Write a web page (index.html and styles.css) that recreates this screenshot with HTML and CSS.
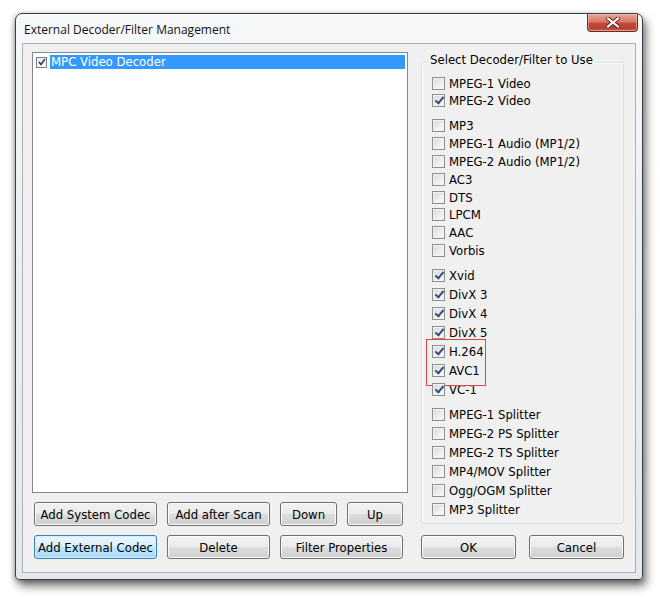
FILE: index.html
```html
<!DOCTYPE html>
<html>
<head>
<meta charset="utf-8">
<link rel="stylesheet" href="styles.css">
</head>
<body>
<div class="page">
  <div class="window">
    <div class="titlebar">
      <span class="title">External Decoder/Filter Management</span>
      <span class="close">
        <svg width="14" height="11" viewBox="0 0 14 11"><path d="M2 1.5 L12 9.5 M12 1.5 L2 9.5" stroke="#5a1f18" stroke-width="4" stroke-linecap="square"/><path d="M2 1.5 L12 9.5 M12 1.5 L2 9.5" stroke="#ffffff" stroke-width="2.2" stroke-linecap="square"/></svg>
      </span>
    </div>
    <div class="client">
      <div class="leftcol">
        <div class="listbox">
          <div class="lb-item">
            <span class="lb-check"><svg width="8" height="8" viewBox="0 0 8 8"><path d="M1 4 L3 6.5 L7 1" fill="none" stroke="#2b3b66" stroke-width="1.6"/></svg></span>
            <span class="lb-text">MPC Video Decoder</span>
          </div>
        </div>
        <div class="btnrow">
          <button class="btn w123">Add System Codec</button>
          <button class="btn w103">Add after Scan</button>
          <button class="btn w57">Down</button>
          <button class="btn w56">Up</button>
        </div>
        <div class="btnrow row2">
          <button class="btn w123 focused">Add External Codec</button>
          <button class="btn w103">Delete</button>
          <button class="btn w123">Filter Properties</button>
        </div>
      </div>
      <div class="rightcol">
        <fieldset class="group">
          <legend class="legend">Select Decoder/Filter to Use</legend>
          <div class="grp g1">
            <div class="row"><span class="cb"></span><span class="lbl">MPEG-1 Video</span></div>
            <div class="row"><span class="cb on"></span><span class="lbl">MPEG-2 Video</span></div>
          </div>
          <div class="grp g2">
            <div class="row"><span class="cb"></span><span class="lbl">MP3</span></div>
            <div class="row"><span class="cb"></span><span class="lbl">MPEG-1 Audio (MP1/2)</span></div>
            <div class="row"><span class="cb"></span><span class="lbl">MPEG-2 Audio (MP1/2)</span></div>
            <div class="row"><span class="cb"></span><span class="lbl">AC3</span></div>
            <div class="row"><span class="cb"></span><span class="lbl">DTS</span></div>
            <div class="row"><span class="cb"></span><span class="lbl">LPCM</span></div>
            <div class="row"><span class="cb"></span><span class="lbl">AAC</span></div>
            <div class="row"><span class="cb"></span><span class="lbl">Vorbis</span></div>
          </div>
          <div class="grp g3">
            <div class="row"><span class="cb on"></span><span class="lbl">Xvid</span></div>
            <div class="row"><span class="cb on"></span><span class="lbl">DivX 3</span></div>
            <div class="row"><span class="cb on"></span><span class="lbl">DivX 4</span></div>
            <div class="row"><span class="cb on"></span><span class="lbl">DivX 5</span></div>
            <div class="mark">
              <div class="row"><span class="cb on"></span><span class="lbl">H.264</span></div>
              <div class="row"><span class="cb on"></span><span class="lbl">AVC1</span></div>
            </div>
            <div class="row"><span class="cb on"></span><span class="lbl">VC-1</span></div>
          </div>
          <div class="grp g4">
            <div class="row"><span class="cb"></span><span class="lbl">MPEG-1 Splitter</span></div>
            <div class="row"><span class="cb"></span><span class="lbl">MPEG-2 PS Splitter</span></div>
            <div class="row"><span class="cb"></span><span class="lbl">MPEG-2 TS Splitter</span></div>
            <div class="row"><span class="cb"></span><span class="lbl">MP4/MOV Splitter</span></div>
            <div class="row"><span class="cb"></span><span class="lbl">Ogg/OGM Splitter</span></div>
            <div class="row"><span class="cb"></span><span class="lbl">MP3 Splitter</span></div>
          </div>
        </fieldset>
        <div class="btnrow okrow">
          <button class="btn w95">OK</button>
          <button class="btn w95">Cancel</button>
        </div>
      </div>
    </div>
  </div>
</div>
</body>
</html>
```

FILE: styles.css
```css
* { box-sizing: border-box; }
html, body { margin: 0; padding: 0; background: #ffffff; }
body { font-family: "DejaVu Sans Condensed", "DejaVu Sans", sans-serif; font-size: 13px; color: #000; }

.page { padding: 13px 0 0 15px; width: 660px; height: 597px; }

.window {
  width: 628px;
  height: 567px;
  border: 1px solid #3c3f44;
  border-radius: 7px 7px 4px 4px;
  background: linear-gradient(180deg, #f7f8fa 0%, #eceff3 40%, #e4e8ec 100%);
  box-shadow: 3px 6px 10px rgba(0,0,0,0.55), -1px 1px 5px rgba(0,0,0,0.25);
  display: flex;
  flex-direction: column;
}

.titlebar {
  height: 29px;
  display: flex;
  justify-content: space-between;
  align-items: flex-start;
  padding: 0 4px 0 8px;
}
.title {
  align-self: center;
  font-family: "Open Sans", "Noto Sans", sans-serif;
  font-size: 12px;
  color: #111;
  padding-top: 2px;
}
.close {
  width: 51px;
  height: 18px;
  border: 1px solid #6c2a22;
  border-top: none;
  border-radius: 0 0 4px 4px;
  background: linear-gradient(180deg, #e7a596 0%, #d77a68 45%, #c44a37 55%, #b8412f 85%, #d06a55 100%);
  box-shadow: inset 0 0 0 1px rgba(255,220,210,0.45);
  display: flex;
  align-items: center;
  justify-content: center;
}

.client {
  flex: 1;
  margin: 0 6px 6px 6px;
  border: 1px solid #aab0b8;
  background: #f0f0f0;
  display: flex;
  gap: 13px;
  padding: 8px 11px 13px 9px;
}

.leftcol { width: 376px; display: flex; flex-direction: column; }
.rightcol { width: 203px; display: flex; flex-direction: column; margin-top: 1px; }

.listbox {
  height: 441px;
  background: #ffffff;
  border: 1px solid #828790;
  padding: 2px 2px;
}
.lb-item { display: flex; align-items: center; height: 14px; }
.lb-check {
  width: 11px; height: 11px;
  border: 1px solid #7a7f8a;
  background: linear-gradient(135deg, #e6e8ec, #ffffff);
  margin: 0 3px 0 1px;
  display: flex; align-items: center; justify-content: center;
}
.lb-text {
  flex: 1;
  height: 14px;
  line-height: 14px;
  background: #3399ff;
  color: #ffffff;
  padding-left: 1px;
}

.btnrow { display: flex; gap: 10px; margin-left: 2px; margin-top: 9px; }
.leftcol .btnrow:first-of-type { margin-top: auto; }
.okrow { margin-left: 0; gap: 13px; margin-top: auto; }

.btn {
  height: 24px;
  font: inherit;
  color: #000;
  border: 1px solid #707070;
  border-radius: 3px;
  background: linear-gradient(180deg, #f2f2f2 0%, #ebebeb 48%, #dddddd 52%, #cfcfcf 100%);
  box-shadow: inset 0 0 0 1px #fbfbfb;
  padding: 0;
  text-align: center;
}
.btn.focused {
  border-color: #3c7fb1;
  background: linear-gradient(180deg, #eaf6fd 0%, #d9f0fc 48%, #bee6fd 52%, #a7d9f5 100%);
  box-shadow: inset 0 0 0 1px #d6ecf8;
}
.w123 { width: 123px; }
.w103 { width: 103px; }
.w57 { width: 57px; }
.w56 { width: 56px; }
.w95 { width: 95px; }

.group {
  margin: 0;
  padding: 0 0 4px 10px;
  border: 1px solid #d5dfe5;
  border-radius: 3px;
  box-shadow: inset 1px 1px 0 #ffffff;
  min-width: 0;
}
.legend {
  margin-left: -4px;
  padding: 0 2px 4px 2px;
  line-height: 14px;
  color: #000;
}

.grp { display: flex; flex-direction: column; }
.g1 { margin-top: 3.5px; }
.g1 .row { height: 17px; }
.g2 { margin-top: 8.6px; }
.g2 .row { height: 17.8px; }
.g3 { margin-top: 7px; }
.g3 .row { height: 19px; }
.g4 { margin-top: 5.5px; }
.g4 .row { height: 19px; }

.row { display: flex; align-items: center; }
.cb {
  width: 13px; height: 13px;
  border: 1px solid #8e8f8f;
  background: linear-gradient(135deg, #d4d6da 0%, #eeeff1 60%, #fbfbfb 100%);
  box-shadow: inset 0 0 0 1px #f4f4f4;
  margin-right: 4px;
  flex: none;
  position: relative;
}
.cb.on::after {
  content: "";
  position: absolute;
  left: 3px; top: 0px;
  width: 3px; height: 7px;
  border: solid #3a4d7a;
  border-width: 0 2px 2px 0;
  transform: rotate(40deg);
  transform-origin: center;
  margin-left: 1px;
}

.mark { position: relative; }
.mark::after {
  content: "";
  position: absolute;
  left: -6px; top: -3.5px;
  width: 58px; height: 45px;
  border: 1.5px solid #d8454a;
}
```
